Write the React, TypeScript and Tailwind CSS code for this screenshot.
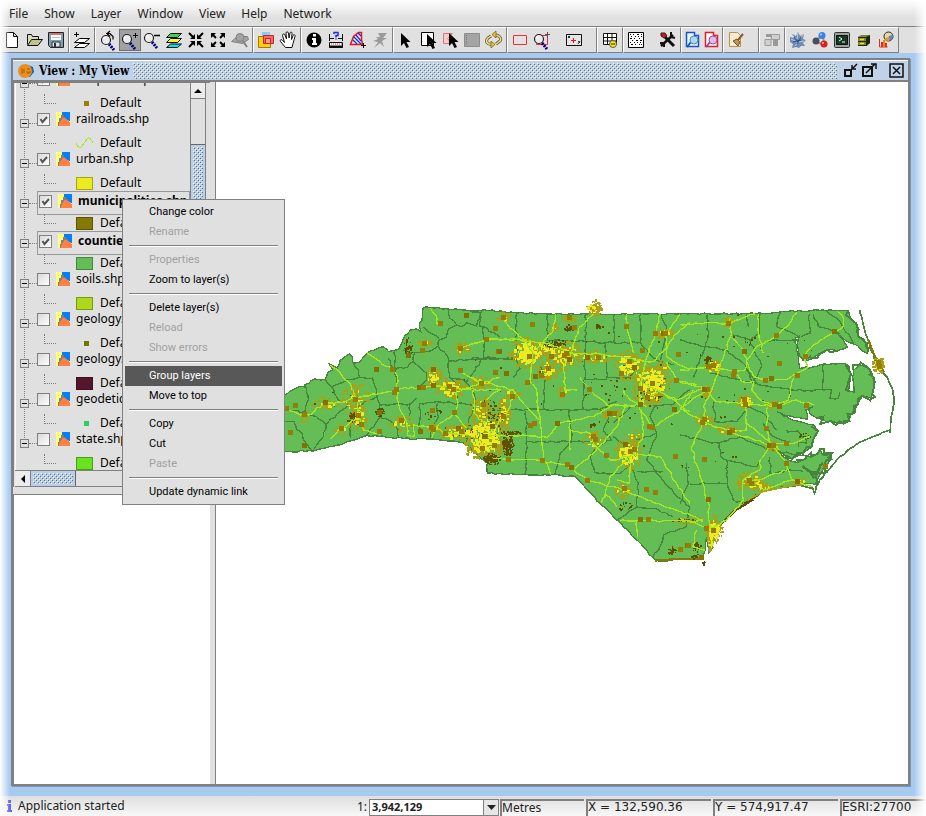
import React from "react";

/* ---------- shared bits ---------- */

function Texture({ id, dark }: { id: string; dark: string }) {
  return (
    <svg className="block h-full w-full" shapeRendering="crispEdges" aria-hidden="true">
      <defs>
        <pattern id={id} width="4" height="4" patternUnits="userSpaceOnUse">
          <path d="M0 0h1v1h-1zM2 2h1v1h-1z" fill="#ffffff" />
          <path d="M1 1h1v1h-1zM3 3h1v1h-1z" fill={dark} />
        </pattern>
      </defs>
      <rect width="100%" height="100%" fill={`url(#${id})`} />
    </svg>
  );
}

/* ---------- toolbar icons, drawn on a 22 x 22 grid ---------- */

const Lens = ({ x = 9, y = 9 }: { x?: number; y?: number }) => (
  <g transform={`translate(${x} ${y})`}>
    <path d="M3 4l5 6" stroke="#000080" strokeWidth="3" strokeDasharray="2 1" />
    <circle r="4.5" fill="#ececec" stroke="#222" strokeWidth="1.2" />
    <path d="M-2.500 0a2.500 2.500 0 0 1 2-2.500" stroke="#fff" fill="none" />
  </g>
);

const Pointer = ({ x = 0, y = 0 }: { x?: number; y?: number }) => (
  <path transform={`translate(${x} ${y})`} d="M7 4v13l3-3 2.500 5 2.500-1-2.500-5h4z" fill="#000" />
);

const icons: Record<string, React.ReactNode> = {
  New: <path d="M5.500 3.500h7l4 4v11h-11zM12.500 3.500v4h4" fill="#fff" stroke="#111" />,
  Open: (
    <>
      <path d="M4.500 15.500v-10h4l1 2h6v3" fill="#d9dcb4" stroke="#111" />
      <path d="M4.500 16.500l4-6h11l-4.500 6z" fill="#bfc48e" stroke="#111" />
    </>
  ),
  Save: (
    <>
      <path d="M3.500 3.500h15v15h-13l-2-2z" fill="#7d9fb8" stroke="#222" />
      <path d="M6 4h10v7h-10z" fill="#fff" />
      <path d="M6 4h10v2h-10z" fill="#e46a5e" />
      <path d="M7 8.500h8" stroke="#bbb" />
      <path d="M7 13h8v5h-8z" fill="#dfe5e8" stroke="#333" />
      <path d="M9 14h2v4h-2z" fill="#234" />
    </>
  ),
  "Add layer": (
    <>
      <path d="M3 5.500h5M5.500 3v5" stroke="#000" />
      <path d="M3.500 18.500l5-4h10l-5 4z" fill="#fff" stroke="#000" />
      <path d="M3.500 13.500l5-4h10l-5 4z" fill="#fff" stroke="#000" />
    </>
  ),
  "Previous zoom": (
    <>
      <Lens x={9} y={11} />
      <path d="M9 4.500h4l3 3v3M13 2l-3 2.500 3 3" stroke="#000" strokeWidth="1.200" fill="none" />
    </>
  ),
  "Zoom in": (
    <>
      <Lens x={8} y={10} />
      <path d="M14 6.500h5M16.500 4v5" stroke="#000" />
    </>
  ),
  "Zoom out": (
    <>
      <Lens x={8} y={9} />
      <path d="M13 6.500h6" stroke="#000" strokeWidth="1.500" />
    </>
  ),
  "Full extent": (
    <g stroke="#111">
      <path d="M3.500 18.500l4-3.500h11l-4 3.500z" fill="#00e5ee" />
      <path d="M3.500 13.500l4-4h11l-4 4z" fill="#fff22e" />
      <path d="M3.500 8.500l4-4h11l-4 4z" fill="#44cf52" />
    </g>
  ),
  "Zoom in centre": (
    <g>
      <path d="M4 4l5 5M18 4l-5 5M4 18l5-5M18 18l-5-5" stroke="#000" strokeWidth="2" />
      <path d="M10 5v5h-5zM12 5v5h5zM10 17v-5h-5zM12 17v-5h5z" fill="#000" />
    </g>
  ),
  "Zoom out centre": (
    <g>
      <path d="M5 5l4 4M17 5l-4 4M5 17l4-4M17 17l-4-4" stroke="#000" strokeWidth="2" />
      <path d="M4 4h5l-5 5zM18 4h-5l5 5zM4 18h5l-5-5zM18 18h-5l5-5z" fill="#000" />
    </g>
  ),
  "Zoom to selection": (
    <g stroke="#808080" fill="#a4a4a4">
      <path d="M2.500 12.500l6-5h10l1 3-6 4z" />
      <circle cx="11" cy="8.500" r="4" />
      <path d="M14 12l4 6" strokeWidth="2" />
    </g>
  ),
  "Locator map": (
    <>
      <path d="M7 3h8v7h-8z" fill="#7ed0f5" />
      <path d="M3.500 7.500h12v11h-12z" fill="#ffcd12" stroke="#a77904" />
      <path d="M8.500 6.500h10v8h-10z" fill="#f06b6b" stroke="#c22" />
      <path d="M10.500 9.500h5v5h-5z" fill="#f9a08e" stroke="#c22" />
    </>
  ),
  Pan: (
    <path d="M8.500 18.500l-5-6c-1-2 1-2.500 2-1l2 2-2-7c0-2 2-2 2.500-.5l1.500 4-.5-6c0-1.500 2-1.500 2.500 0l.5 5 1-5c.5-1.500 2.500-1 2 .5l-.5 6 1.500-4c1-1.500 2.500-.5 2 1l-2 7-1 4z" fill="#fff" stroke="#111" />
  ),
  Information: (
    <>
      <circle cx="11" cy="11" r="7.500" fill="#000" />
      <path d="M10 5h3v2.500h-3zM9 9h4v5h1v2h-5v-2h1v-3h-1z" fill="#fff" />
    </>
  ),
  "Measure distance": (
    <>
      <path d="M9 5v-1.500h4v3h-2v2M11 9.500v1" stroke="#1730e0" strokeWidth="1.500" fill="none" />
      <path d="M4.500 5v7M17.500 5v7M5 9.500h4M13 9.500h4" stroke="#111" />
      <path d="M4.500 13.500h13v5h-13z" fill="#fff" stroke="#111" />
      <path d="M4 17.500h14" stroke="#000" strokeWidth="2" />
      <path d="M6 15h11" stroke="#e21" strokeDasharray="1 1" />
    </>
  ),
  "Measure area": (
    <>
      <path d="M3.500 15.500l3-8 5-4h3v7l1 5z" fill="#dfe4ff" stroke="#e11" strokeWidth="1.500" />
      <path d="M6 11l4 4M7 8l7 7M9 6l5 6M11 4l3 3" stroke="#1730d0" strokeWidth="1.200" />
      <path d="M14 16.500h5M16.500 14v5" stroke="#000" />
    </>
  ),
  "Quick information": <path d="M9 4h9l-4 5h4l-5 3 2 6-4-4-6 5 4-6-5-1 5-2-2-2h4z" fill="#9b9b9b" />,
  "Select by point": <Pointer x={-1} />,
  "Select by rectangle": (
    <>
      <path d="M4.500 3.500h12v13h-12z" fill="#fff" stroke="#000" />
      <Pointer x={3} y={1} />
    </>
  ),
  "Select by polygon": (
    <>
      <path d="M4.500 4.500h9l-5 5 4 5h-8z" fill="#f6cccc" stroke="#d77" />
      <Pointer x={3} />
    </>
  ),
  "Select by attributes": (
    <>
      <path d="M3.500 4.500h15v13h-15z" fill="#a4a4a4" stroke="#8c8c8c" />
      <path d="M5.500 6v10" stroke="#777" strokeDasharray="1 1" />
    </>
  ),
  "Clear selection": (
    <>
      <path d="M12 6c4 0 7 3 5 6l-4 3M9 15c-5 1-7-3-4-6l3-2" stroke="#6b5a1c" strokeWidth="3" fill="none" />
      <path d="M12 6c4 0 7 3 5 6l-4 3M9 15c-5 1-7-3-4-6l3-2" stroke="#e9dc8c" strokeWidth="1.500" fill="none" />
      <path d="M13 2v7l-4-3.500zM8 12v7l4-3.500z" fill="#f0c428" stroke="#665520" strokeWidth="0.700" />
    </>
  ),
  Frame: <path d="M4.500 6.500h13v9h-13z" fill="#e8dede" stroke="#e0333a" />,
  "Frame manager": (
    <>
      <path d="M5.500 6.500h11v9h-11z" fill="#e8dede" stroke="#e0333a" />
      <Lens x={8} y={10} />
      <path d="M16.500 3v6M14 5.500h5" stroke="#555" />
    </>
  ),
  "Centre on point": (
    <>
      <path d="M3.500 5.500h15v11h-15z" fill="#e6e6e6" stroke="#111" />
      <path d="M8 11.500h5M10.500 9v5" stroke="#e11" />
      <path d="M5 7l2 2M7 7l-2 2M15 12l2 2M17 12l-2 3" stroke="#333" />
    </>
  ),
  "Attribute table": (
    <>
      <path d="M4.500 4.500h13v11h-13zM4.500 8.500h13M4.500 12h13M8.500 4.500v11M13 4.500v11" fill="#fff" stroke="#111" />
      <circle cx="14" cy="15" r="3.500" fill="#fff200" stroke="#555" />
      <path d="M12 15h4" stroke="#111" />
    </>
  ),
  "Point density": (
    <>
      <path d="M3.500 3.500h15v15h-15z" fill="#fff" stroke="#000" />
      <path
        d="M5 5.500h1m2 0h1m3 0h2m2 0h1M6 7.500h1m3 0h1m2 0h1m2 0h1M5 9.500h2m2 0h1m4 0h1M7 11.500h1m3 0h2m2 0h2M5 13.500h1m3 0h1m2 0h1m2 0h1M6 15.500h2m2 0h1m3 0h1m1 0h1"
        stroke="#000"
      />
    </>
  ),
  Tools: (
    <>
      <path d="M4 17L16 6" stroke="#111" strokeWidth="2.500" />
      <path d="M14 3v5l4 1M3 14l4 0v4" stroke="#111" strokeWidth="2" fill="none" />
      <path d="M8 8l9 9" stroke="#111" strokeWidth="3" />
      <path d="M4 4l4 0 2 3-3 2-3-2z" fill="#b02525" stroke="#511" />
    </>
  ),
  "Blue query": (
    <>
      <path d="M4.500 3.500h8v3h4v11h-12z" fill="#eef4ff" stroke="#1555c8" strokeWidth="1.500" />
      <path d="M9 13l-4 5" stroke="#1555c8" strokeWidth="2" />
      <circle cx="12" cy="11" r="4" fill="#a9dbf3" stroke="#5581a5" />
    </>
  ),
  "Red query": (
    <>
      <path d="M4.500 3.500h8v3h4v11h-12z" fill="#fff" stroke="#ed1b22" strokeWidth="1.500" />
      <path d="M9 13l-4 5" stroke="#824fad" strokeWidth="2" />
      <circle cx="12" cy="11" r="4" fill="#e7b8f0" stroke="#87599b" />
    </>
  ),
  "Edit style": (
    <>
      <path d="M4.500 3.500h8l3 3v11h-11z" fill="#f5ecd6" stroke="#b7954f" />
      <path d="M8 12l4-2 3 3-2 4z" fill="#c29551" stroke="#76511e" />
      <path d="M13 11l5-6" stroke="#8a5b24" strokeWidth="2" />
    </>
  ),
  Layout: (
    <>
      <path d="M4 10.500h6v6h-6zM10.500 5.500h8v5h-8z" fill="#d0d0d0" stroke="#9b9b9b" />
      <path d="M5 5h5v3h-5zM12 10h5v7h-5z" fill="#999" />
    </>
  ),
  Geoprocess: (
    <>
      <path d="M3 8l4 1-2-4 4 2 2-4 2 4 4-2-1 5 3 1-3 3 2 3-4 0-2 2-3-1-4 1 1-4-3-2z" fill="#6d8bb5" />
      <path d="M5 6l4 4M11 4l-1 6M16 6l-4 5M4 10l6 3M17 12l-5 1M8 17l3-4" stroke="#bccbe0" />
      <path d="M7 8l4 5M14 8l-4 7M6 13l8-2" stroke="#304b78" />
    </>
  ),
  Network: (
    <>
      <path d="M6 12l8-6M6 12l9 4M14 6l1 10" stroke="#999" strokeWidth="2" />
      <circle cx="13" cy="6.500" r="3.500" fill="#3b80e8" />
      <circle cx="7" cy="12" r="3.500" fill="#48505e" />
      <circle cx="15" cy="15" r="3.500" fill="#e21b1b" />
      <circle cx="12" cy="5.500" r="1" fill="#bcd6ff" />
      <circle cx="14" cy="14" r="1" fill="#fcc" />
    </>
  ),
  Console: (
    <>
      <rect x="3.500" y="3.500" width="15" height="15" rx="1" fill="#9ba59b" stroke="#333" />
      <path d="M5.500 6.500h11v9h-11z" fill="#1d3826" stroke="#111" />
      <path d="M8 8l3 2-3 2M11 13h3" stroke="#dfe" fill="none" />
    </>
  ),
  Archive: (
    <>
      <path d="M5 8l3-2h9v8l-3 3h-9z" fill="#7b8a20" />
      <path d="M13 8l4-2v8l-4 3z" fill="#1e2208" />
      <path d="M5 8.500h9M5 12.500h9M5 16.500h9" stroke="#222" />
      <path d="M7 10.500h4M7 14.500h4" stroke="#e4df3b" strokeWidth="1.500" />
    </>
  ),
  Chart: (
    <>
      <path d="M4.500 10v8h8" stroke="#c33" fill="none" />
      <path d="M6 13h2v5h-2zM10 14h2v4h-2z" fill="#e22" />
      <path d="M8 11h2v7h-2z" fill="#e98b00" />
      <circle cx="13.500" cy="7.500" r="4.500" fill="#ead7a8" stroke="#222" />
      <path d="M13.500 7.500l4-2a4.500 4.500 0 0 1-3 6.300z" fill="#5d87c5" />
      <path d="M13.500 7.500l1 4.300a4.500 4.500 0 0 1-5-2z" fill="#e99b1f" />
    </>
  ),
};

type Group = { items: string[]; cell?: string; pad?: string };

const groups: Group[] = [
  { items: ["New", "Open", "Save"] },
  { items: ["Add layer"] },
  { items: ["Previous zoom", "Zoom in", "Zoom out", "Full extent", "Zoom in centre", "Zoom out centre", "Zoom to selection"] },
  { items: ["Locator map", "Pan"] },
  { items: ["Information", "Measure distance", "Measure area", "Quick information"] },
  { items: ["Select by point", "Select by rectangle", "Select by polygon", "Select by attributes", "Clear selection"] },
  { items: ["Frame", "Frame manager", "|", "Centre on point"], pad: "pr-[11px]" },
  { items: ["Attribute table"] },
  { items: ["Point density", "|", "Tools"] },
  { items: ["Blue query", "Red query"], cell: "w-[19px]" },
  { items: ["Edit style"], pad: "pr-[11px]" },
  { items: ["Layout"] },
  { items: ["Geoprocess", "Network", "Console", "Archive", "Chart"] },
];

function Toolbar() {
  return (
    <div className="flex h-[27px] shrink-0 overflow-hidden border-t border-[#808080] bg-[#e0e0e0]" role="toolbar">
      {groups.map((g, i) => (
        <div
          key={i}
          className={`flex shrink-0 items-center border-b border-l border-r border-t border-b-[#808080] border-l-white border-r-[#808080] border-t-white ${i === 0 ? "" : "pl-px"} ${g.pad ?? "pr-px"}`}
        >
          {g.items.map((name, k) =>
            name === "|" ? (
              <span key={k} className="w-2.5" />
            ) : (
              <button
                key={k}
                type="button"
                aria-label={name}
                className={`flex h-[22px] items-center justify-center ${g.cell ?? "w-[22px]"} ${name === "Zoom in" ? "border border-[#6e6e6e] bg-[#a0a0a0]" : ""}`}
              >
                <svg width="22" height="22" viewBox="0 0 22 22" fill="none" className="shrink-0">
                  {icons[name]}
                </svg>
              </button>
            )
          )}
        </div>
      ))}
    </div>
  );
}

/* ---------- layer tree ---------- */

type Layer = {
  name: string;
  on?: boolean;
  active?: boolean;
  kind: "dot" | "line" | "fill";
  color: string;
  edge?: string;
};

const layers: Layer[] = [
  { name: "hospitals.shp", kind: "dot", color: "#958300", on: true },
  { name: "railroads.shp", kind: "line", color: "#a5e61e", on: true },
  { name: "urban.shp", kind: "fill", color: "#ebeb20", edge: "#a5a514", on: true },
  { name: "municipalities.shp", kind: "fill", color: "#857a06", edge: "#5c5404", on: true, active: true },
  { name: "counties.shp", kind: "fill", color: "#64be55", edge: "#46853c", on: true, active: true },
  { name: "soils.shp", kind: "fill", color: "#afd71c", edge: "#7b9713" },
  { name: "geology.shp", kind: "dot", color: "#757500" },
  { name: "geology.shp", kind: "fill", color: "#55162b", edge: "#3b0f1e" },
  { name: "geodetic.shp", kind: "dot", color: "#28cf5c" },
  { name: "state.shp", kind: "fill", color: "#69e321", edge: "#499f17" },
];

function LayerIcon() {
  return (
    <svg width="14" height="14" viewBox="0 0 14 14" shapeRendering="crispEdges" className="shrink-0">
      <path d="M0 0h14v14h-14z" fill="#ffff7d" />
      <path d="M6 0h8v9h-3l-2-3h-3z" fill="#0080ff" />
      <path d="M5 3h3v2h2v2h-4v3h-1v4h-3v-4h1v-4h2z" fill="#808080" />
      <path d="M6 6h3v1h2v1h2v2h1v4h-11v-3h1v-2h1v-1h1z" fill="#ff8040" />
    </svg>
  );
}

function Tree() {
  return (
    <ul className="relative flex min-h-0 flex-1 flex-col justify-end overflow-hidden border-l border-white bg-[#e0e0e0] text-[12px] leading-[14px] text-black">
      {layers.map((l, i) => (
        <li key={i} className="shrink-0">
          <div className="flex h-[26px] items-center pl-1">
            <button type="button" aria-label={`Collapse ${l.name}`} className="z-10 flex size-[9px] shrink-0 items-center justify-center border border-[#808080] bg-[#e0e0e0]">
              <span className="h-px w-[5px] bg-black" />
            </button>
            <span className="w-2 shrink-0 border-t border-dotted border-[#808080]" />
            <label
              className={`flex shrink-0 items-center gap-[6px] whitespace-nowrap ${
                l.active ? "h-6 w-[153px] border border-[#999] pb-1 pl-px font-bold" : "h-[26px] pb-2"
              }`}
            >
              <span className="relative flex size-[13px] shrink-0">
                <input
                  type="checkbox"
                  defaultChecked={l.on}
                  className="size-[13px] appearance-none border border-[#808080] bg-gradient-to-br from-[#d8d8d8] to-white"
                />
                {l.on && (
                  <svg className="pointer-events-none absolute left-0 top-0" width="13" height="13" viewBox="0 0 13 13">
                    <path d="M3.500 6l2 3 4.500-5" fill="none" stroke="#555" strokeWidth="2" />
                  </svg>
                )}
              </span>
              <LayerIcon />
              <span>{l.name}</span>
            </label>
          </div>
          <div className="flex h-3.5 items-center pl-7">
            <span className="mb-2 h-2.5 w-3 shrink-0 border-b border-l border-dotted border-[#808080]" />
            <span className="ml-5 flex w-[17px] shrink-0 items-center justify-center">
              <svg width="17" height="13" viewBox="0 0 17 13" shapeRendering="crispEdges">
                {l.kind === "fill" && <rect x="0.5" y="0.5" width="16" height="12" fill={l.color} stroke={l.edge} />}
                {l.kind === "dot" && <rect x="8" y="4" width="5" height="5" fill={l.color} />}
                {l.kind === "line" && <path d="M0 6q3 7 6 3t6-8q2-1 5 5" fill="none" stroke={l.color} />}
              </svg>
            </span>
            <span className="ml-[7px]">Default</span>
          </div>
        </li>
      ))}
      <li aria-hidden="true" className="absolute bottom-[26px] left-2 top-0 border-l border-dotted border-[#808080]" />
    </ul>
  );
}

/* ---------- map ---------- */

function makeRandom(seed: number) {
  let s = seed;
  return () => {
    s = (s * 16807) % 2147483647;
    return s / 2147483647;
  };
}

type Pt = [number, number];
const parse = (t: string): Pt[] =>
  t.trim().split(/\s+/).map((p) => p.split(",").map(Number) as Pt);

// Breaks straight runs into short uneven steps, as in digitised boundaries.
function rough(text: string, amp: number, seed: number, closed = false) {
  const rnd = makeRandom(seed);
  const pts = parse(text);
  let d = `M${pts[0][0]} ${pts[0][1]}`;
  for (let i = 1; i < pts.length; i++) {
    const [ax, ay] = pts[i - 1];
    const [bx, by] = pts[i];
    const n = Math.max(1, Math.round(Math.hypot(bx - ax, by - ay) / 12));
    for (let k = 1; k <= n; k++) {
      const j = k === n ? 0 : amp;
      const x = ax + ((bx - ax) * k) / n + (rnd() - 0.5) * j;
      const y = ay + ((by - ay) * k) / n + (rnd() - 0.5) * j;
      d += `L${x.toFixed(0)} ${y.toFixed(0)}`;
    }
  }
  return closed ? d + "z" : d;
}

function speckle(cx: number, cy: number, rx: number, ry: number, n: number, size: number, seed: number) {
  const rnd = makeRandom(seed);
  let d = "";
  for (let i = 0; i < n; i++) {
    const a = rnd() * Math.PI * 2;
    const r = Math.pow(rnd(), 0.8);
    const w = 3 * (1 + Math.floor(rnd() * size));
    const h = 3 * (1 + Math.floor(rnd() * size));
    const x = Math.round((cx + Math.cos(a) * rx * r - w / 2) / 3) * 3;
    const y = Math.round((cy + Math.sin(a) * ry * r - h / 2) / 3) * 3;
    d += `M${x} ${y}h${w}v${h}h${-w}z`;
  }
  return d;
}

const land =
  "-150,400 -60,350 15,315 30,303 60,290 78,292 74,284 105,267 135,268 142,248 158,240 148,222 172,235 180,212 210,192 218,202 220,220 238,218 262,188 275,182 310,170 325,184 340,182 356,178 370,145 392,120 410,117 422,125 418,100 426,92 430,52 500,56 550,60 660,63 715,69 800,72 1200,72 1500,69 1500,64 1640,61 1706,61 1712,85 1728,100 1735,140 1758,160 1762,190 1742,178 1722,162 1695,150 1675,134 1690,150 1702,172 1672,182 1640,180 1618,192 1594,206 1570,212 1558,196 1552,160 1558,138 1546,145 1550,180 1556,215 1558,236 1600,231 1636,222 1690,220 1706,226 1712,250 1706,303 1722,306 1720,240 1740,224 1765,234 1780,260 1782,290 1775,326 1748,318 1732,345 1715,372 1708,392 1690,400 1640,396 1610,384 1590,372 1586,355 1600,350 1578,360 1582,388 1530,378 1492,366 1510,378 1545,392 1600,404 1614,424 1600,448 1594,472 1570,488 1536,506 1512,494 1492,480 1510,500 1530,512 1554,518 1580,500 1612,492 1620,478 1630,496 1656,490 1654,508 1622,548 1606,584 1588,580 1560,582 1490,596 1450,604 1415,628 1365,665 1325,700 1306,738 1294,782 1286,790 1280,740 1276,780 1262,806 1190,806 1140,815 1125,808 1040,718 960,640 882,558 770,555 622,550 622,520 580,485 560,458 480,450 370,445 260,437 215,452 175,465 100,483 15,484 -150,484";

const coast = [
  "1706,226 1712,250 1706,303",
  "1720,240 1740,224 1765,234 1780,260 1782,290 1775,326 1748,318 1732,345 1715,372 1708,392 1690,400 1640,396 1610,384",
  "1600,404 1614,424 1600,448 1594,472 1570,488 1536,506 1512,494",
  "1554,518 1580,500 1612,492 1620,478 1630,496 1656,490 1654,508 1622,548 1606,584",
  "1706,61 1712,85 1728,100 1735,140 1758,160 1762,190",
  "1672,182 1640,180 1618,192 1594,206 1570,212",
];

const banks = [
  "1740,60 1748,95 1760,140 1776,186 1798,236 1822,262 1838,300 1843,335 1834,380 1830,428",
  "1830,420 1790,436 1740,456 1700,484 1670,510 1634,552 1608,590 1604,610 1598,594 1560,586 1500,592",
];

const counties = [
  "505,60 510,85 530,105 545,110 560,98 590,108 605,62", "430,110 455,130 478,148 500,140 505,118 530,105", "478,148 475,168 440,185 404,188 370,180",
  "610,110 611,204 505,214", "475,168 500,195 505,214 508,262 545,300", "404,188 400,215 370,235 340,235 325,205", "345,180 345,215 350,290",
  "400,215 440,250 440,268 420,288", "220,220 235,240 240,262 200,270 155,290", "135,268 155,290 175,330 205,345", "240,262 278,264 290,300 292,318 230,352",
  "80,293 85,330 75,366 40,362", "75,366 110,380 138,402 130,440 100,480", "138,402 180,365 205,345", "211,380 211,445", "292,318 300,345 390,342 410,325", "300,345 300,382 260,436",
  "300,382 330,392 355,420 355,440", "390,342 388,390", "420,340 418,430", "420,340 480,336 575,345", "472,340 475,380 455,410 450,446", "575,205 660,206", "610,204 545,298",
  "511,264 550,270 580,300 585,345 565,390 560,456", "-10,392 42,395 50,418 66,430 72,452 95,482",
  "570,62 600,70 600,110 610,110 660,140", "710,68 709,205 612,204", "803,72 803,152", "610,204 709,208 720,235 700,262", "917,72 917,155 1000,158 1082,157 1081,72", "1003,72 1002,157",
  "803,152 917,155 914,268 980,268 976,158", "793,360 795,270 780,230", "910,358 911,270", "650,360 960,358 1010,335", "738,362 740,450 735,552", "868,360 875,455 840,490 825,555", "740,455 875,455 930,455",
  "960,358 985,385 970,420 995,450", "980,262 1050,262 1068,235", "1082,157 1110,195 1140,215 1180,225", "1143,72 1160,110 1148,175 1140,215", "1000,400 1052,350 1082,340",
  "995,450 950,470 930,500 945,548 960,550 1020,550 1050,520", "1000,440 1040,465 1070,450 1130,430", "1130,345 1110,380 1130,430 1100,510 1140,560 1190,620 1230,650", "1070,545 1150,543",
  "1050,520 1075,580 1070,650 1010,690", "1070,650 1120,655 1180,680", "1230,650 1220,710 1150,735 1140,770 1118,800", "1120,345 1175,345 1230,300",
  "1283,72 1283,150 1240,265", "1200,150 1283,170 1340,180", "1440,72 1438,130 1410,150 1360,135", "1410,150 1445,230 1420,280 1400,240", "1462,152 1555,150", "1340,180 1390,220 1430,280 1400,275 1340,260 1290,250",
  "1430,280 1535,300 1655,300 1650,325 1675,325 1680,305", "1535,300 1525,330 1480,350", "1630,222 1628,298", "1400,72 1405,110", "1500,72 1490,110 1530,125 1555,140",
  "1600,72 1615,110 1680,130", "1640,62 1680,95 1722,162", "1588,72 1590,130 1562,140", "1302,335 1304,395 1370,395 1400,360", "1200,435 1230,445 1318,460 1322,500 1340,510 1342,580 1230,582",
  "1318,460 1380,440 1460,478 1580,500", "1342,580 1360,630 1390,640", "1340,510 1430,530 1440,510", "1470,500 1470,550 1530,540 1570,545", "1450,400 1480,440 1530,455", "1220,520 1225,580 1200,640", "1400,350 1450,370 1490,420",
];

const roads = [
  "15,357 45,366 60,375 95,372 130,340 185,337 228,325 290,313 350,298 420,292 500,290 545,298 605,280",
  "150,225 180,248 205,275 228,325 236,380 250,420 300,432", "262,188 300,215 338,240 352,258 350,298 358,350 380,395 382,435 402,440 402,405 455,412 500,430 560,435",
  "452,55 468,75 472,105", "535,178 580,160 620,148 660,150 740,150", "540,240 572,262 605,280 660,262", "150,447 185,415 228,388", "530,300 532,350 525,370 470,410 455,445",
  "525,370 560,415", "580,300 582,370 615,400", "545,298 660,300 640,310 620,330",
  "570,164 630,148 710,148 740,155 800,160 880,190 960,192 1020,200 1080,210 1120,215 1200,120 1230,98", "670,82 690,115 735,150 760,190 750,270 770,300 780,400 790,500 812,555",
  "770,180 820,120 826,72", "940,72 900,110 885,150 870,200 850,240 855,300 890,300", "570,262 620,280 700,300 740,350 780,390", "620,440 740,437 800,442 840,400 940,380 1000,345 1080,345",
  "640,505 780,512 860,525 925,572 1000,590 1100,630 1270,690", "700,320 680,370 630,430", "900,262 930,300 980,345 1060,350 1140,300", "1040,72 1045,130 1060,190", "1140,72 1130,120 1100,200 1080,280 1080,345 1090,400 1085,450 1050,500",
  "1090,280 1150,310 1190,330 1280,290", "1082,360 1120,410 1200,360 1240,300", "1150,310 1230,365", "1050,500 990,560 965,640", "1050,490 1140,500 1190,580 1230,640", "870,400 870,480", "870,420 930,430 950,470 990,510 1050,500",
  "885,535 940,490 1010,410 1040,345", "1020,693 1270,693", "1070,693 1072,740", "1230,240 1160,200 1160,130 1200,72", "1050,500 1048,580 1010,570", "975,605 1010,650", "1160,215 1190,270 1250,285", "1030,300 1050,330 1100,350",
  "1200,103 1290,98 1345,100 1425,72", "1350,85 1352,140 1390,180 1420,260 1470,270 1520,268 1552,250", "1550,68 1520,110 1490,140 1430,170 1400,210 1395,240 1360,245", "1436,72 1436,130 1450,190",
  "1352,140 1320,230 1295,300 1275,340 1270,395 1235,470 1260,560 1285,640 1290,710", "1200,240 1290,232 1365,243 1385,275 1420,275 1415,300 1440,330 1490,350", "1200,275 1280,298 1310,335 1400,340 1480,350 1550,330 1600,345",
  "1200,355 1280,300", "1200,355 1270,395 1350,425 1470,465 1540,460 1590,440", "1463,350 1460,415 1475,465 1520,520 1535,570 1600,590", "1400,345 1398,420 1350,430", "1475,465 1440,510 1440,540 1390,570 1390,630 1340,690 1290,715",
  "1535,570 1450,600", "1200,685 1290,715", "1540,265 1525,330 1490,345", "1575,200 1584,232 1552,250", "1575,200 1600,165 1660,128 1690,110 1690,85 1670,62", "1400,400 1500,480", "1415,575 1520,540", "1250,720 1238,770 1275,780",
];

const towns =
  "482,100 559,76 646,115 435,160 427,181 385,196 542,176 620,148 655,184 289,238 338,240 350,299 345,308 460,240 541,241 646,247 605,280 420,292 432,294 508,290 520,298 460,286 228,328 236,378 246,403 138,337 47,346 73,373 32,429 73,468 184,415 300,425 365,393 421,424 455,412 460,420 524,367 535,415 496,430 544,424 612,345 638,411 618,440 20,357 459,362 300,368 " +
  "672,82 757,105 884,114 658,184 748,200 814,200 860,190 870,210 855,196 868,84 805,235 766,260 784,256 742,277 697,320 679,250 848,315 928,300 956,204 922,204 670,380 763,400 751,406 832,400 686,508 788,512 862,523 874,534 924,573 643,466 607,475 615,440 940,440 947,448 979,496 990,372 1003,372 1052,484 1064,480 1036,464 1033,596 1099,598 1126,607 1081,690 1105,688 1087,182 1127,132 1150,132 1158,130 1195,193 1190,273 1184,360 1118,413 1110,411 1050,215 1063,233 1082,295 1117,280 1102,322 1081,343 1025,250 1039,109 1188,500 1224,768 1201,778 " +
  "1345,102 1489,138 1663,126 1577,200 1498,220 1552,256 1474,265 1457,273 1363,244 1360,256 1393,184 1286,230 1302,228 1282,300 1275,300 1394,330 1398,345 1483,345 1498,349 1579,346 1460,415 1519,462 1470,468 1480,468 1520,520 1636,529 1552,574 1408,572 1415,582 1357,422 1350,428 1274,390 1268,398 1275,510 1285,628 1279,715 1300,722 1226,768 1264,802 1796,218 1800,230";

// cx, cy, rx, ry, density of the built-up halo, density of the bright core
const cities: [number, number, number, number, number, number][] = [
  [225, 330, 46, 52, 110, 20], [235, 385, 30, 46, 80, 18], [135, 342, 42, 20, 50, 5], [365, 400, 36, 24, 40, 10], [460, 260, 26, 34, 80, 24], [515, 296, 48, 32, 130, 50],
  [545, 178, 26, 18, 40, 4], [435, 158, 22, 12, 20, 2], [605, 280, 34, 20, 60, 5], [535, 430, 60, 26, 110, 40], [600, 365, 32, 50, 130, 14], [675, 360, 18, 50, 80, 14], [618, 440, 66, 72, 330, 230], [585, 485, 26, 20, 50, 2],
  [670, 385, 24, 44, 80, 14], [697, 318, 22, 26, 44, 8], [740, 190, 56, 48, 190, 150], [790, 180, 60, 30, 80, 30], [855, 196, 54, 48, 200, 70], [806, 240, 32, 34, 80, 24], [672, 82, 22, 16, 28, 2], [950, 202, 62, 20, 80, 8],
  [850, 305, 16, 28, 24, 2], [940, 450, 32, 28, 60, 7], [942, 55, 24, 24, 60, 10], [1048, 228, 44, 48, 150, 90], [1115, 275, 62, 58, 260, 150], [1105, 325, 44, 24, 90, 12], [1046, 492, 42, 50, 160, 100],
  [1060, 440, 28, 24, 30, 6], [1030, 603, 28, 20, 40, 6], [1150, 130, 34, 14, 40, 4], [1000, 375, 26, 22, 34, 2], [1150, 235, 20, 24, 34, 2], [868, 85, 24, 12, 22, 0],
  [1300, 230, 26, 24, 54, 18], [1280, 300, 22, 22, 34, 2], [1400, 335, 28, 22, 64, 26], [1270, 393, 30, 24, 54, 4], [1345, 422, 34, 18, 50, 4], [1408, 574, 42, 30, 90, 22], [1303, 720, 26, 40, 120, 80],
  [1293, 760, 9, 28, 30, 12], [1450, 590, 30, 14, 50, 6], [1475, 468, 22, 20, 34, 4], [1796, 225, 18, 26, 54, 9], [1230, 692, 50, 12, 34, 0], [1560, 574, 26, 14, 24, 2], [1345, 98, 20, 16, 18, 0],
  [1484, 345, 22, 14, 22, 2], [75, 380, 12, 24, 18, 1], [185, 418, 20, 18, 18, 1], [455, 415, 26, 14, 24, 2], [640, 190, 0, 0, 1, 0], [735, 150, 14, 18, 14, 2], [820, 115, 14, 18, 14, 2],
];

const darkSpots: [number, number, number, number, number][] = [
  [386, 170, 16, 30, 44], [215, 383, 14, 16, 44], [300, 368, 13, 12, 50], [638, 508, 28, 18, 110], [685, 468, 18, 32, 150], [700, 430, 36, 9, 44], [826, 162, 34, 14, 70], [868, 115, 15, 10, 34], [958, 110, 11, 7, 18],
  [455, 370, 30, 24, 12], [638, 385, 36, 56, 50], [560, 430, 60, 16, 24], [940, 406, 8, 6, 12], [1285, 212, 12, 14, 40], [1410, 160, 200, 90, 22], [1370, 330, 160, 60, 16], [1175, 785, 14, 14, 26], [1250, 772, 14, 14, 30], [1248, 800, 18, 7, 20],
  [1272, 820, 8, 6, 12], [1000, 300, 260, 180, 44], [1210, 690, 40, 6, 16], [1270, 500, 110, 80, 9], [500, 300, 200, 120, 12], [150, 360, 120, 80, 8], [1575, 440, 20, 10, 12], [1035, 650, 30, 12, 14], [1110, 320, 50, 40, 24],
];

function StateMap() {
  return (
    <svg width="694" height="704" viewBox="216 82 694 704" className="block shrink-0" shapeRendering="crispEdges" role="img" aria-label="Map of counties, municipalities, urban areas and railroads">
      <g transform="translate(280 290) scale(.333333)" fill="none">
        <path d={rough(land, 5, 11, true)} fill="#64be55" stroke="#46853c" strokeWidth="4" />
        {coast.map((c, i) => (
          <path key={i} d={rough(c, 22, 31 + i)} stroke="#46853c" strokeWidth="6" />
        ))}
        <path d={rough("1520,420 1560,430 1580,450 1555,470", 20, 5)} stroke="#46853c" strokeWidth="4" />
        <path d={rough("1570,530 1590,545 1600,560 1630,520", 26, 9)} stroke="#46853c" strokeWidth="8" />
        {banks.map((c, i) => (
          <path key={i} d={rough(c, 4, 71 + i)} stroke="#46853c" strokeWidth="5" />
        ))}
        {counties.map((c, i) => (
          <path key={i} d={rough(c, 6, 101 + i)} stroke="#46853c" strokeWidth="4" />
        ))}
        <path d="M1325 700L1365 662L1420 628M1395 640L1430 615" stroke="#5f5000" strokeWidth="7" />
        <path d="M1400 632L1450 604L1500 594L1560 582" stroke="#a5a514" strokeWidth="5" />
        <path d="M1125 812L1200 806L1262 806" stroke="#857a06" strokeWidth="6" />
        <path d="M1765 150L1780 190L1812 246" stroke="#857a06" strokeWidth="7" />
        {cities.map(([x, y, rx, ry, n], i) => (
          <path key={i} d={speckle(x, y, rx, ry, n, 3, 501 + i * 13)} fill="#aaa016" />
        ))}
        {darkSpots.map(([x, y, rx, ry, n], i) => (
          <path key={i} d={speckle(x, y, rx, ry, n, 2, 301 + i * 7)} fill="#5f5000" />
        ))}
        {cities.map(([x, y, rx, ry, , n], i) => (
          <path key={i} d={speckle(x, y, rx * 0.68, ry * 0.68, n, 3, 901 + i * 17)} fill="#ebeb20" />
        ))}
        {roads.map((c, i) => (
          <path key={i} d={rough(c, 6, 1301 + i)} stroke="#a5e61e" strokeWidth="4" />
        ))}
        {parse(towns).map(([x, y], i) => (
          <rect key={i} x={x - 8} y={y - 8} width="15" height="15" fill={i % 4 === 1 ? "#857006" : "#957d08"} />
        ))}
      </g>
    </svg>
  );
}

/* ---------- context menu ---------- */

const menuItems = [
  "Change color", "~Rename", "-", "~Properties", "Zoom to layer(s)", "-", "Delete layer(s)", "~Reload", "~Show errors", "-",
  "Group layers", "Move to top", "-", "Copy", "Cut", "~Paste", "-", "Update dynamic link",
];

function ContextMenu() {
  return (
    <div role="menu" className="absolute left-[122px] top-[199px] z-20 w-[163px] border border-[#808080] bg-[#e0e0e0] p-0.5 font-[Roboto,sans-serif] text-[11px] leading-5">
      {menuItems.map((m, i) =>
        m === "-" ? (
          <div key={i} role="separator" className="mx-1 flex h-2 items-center">
            <div className="h-0.5 w-full border-b border-t border-b-white border-t-[#808080]" />
          </div>
        ) : (
          <button
            key={i}
            type="button"
            role="menuitem"
            disabled={m.startsWith("~")}
            className={`block h-5 w-full whitespace-nowrap pl-6 text-left ${
              m === "Group layers" ? "bg-[#585858] text-white" : m.startsWith("~") ? "text-[#a0a0a0]" : "text-black"
            }`}
          >
            {m.replace("~", "")}
          </button>
        )
      )}
    </div>
  );
}

/* ---------- page ---------- */

const field = "h-[17px] shrink-0 overflow-hidden whitespace-nowrap border-l-2 border-t-2 border-[#808080] leading-[13px]";

export default function App() {
  return (
    <div className="relative flex h-screen flex-col overflow-hidden bg-[#a6caf0] font-['Noto_Sans',sans-serif] text-[12px] text-[#222]">
      <nav className="flex h-[26px] shrink-0 items-center gap-4 bg-gradient-to-b from-white to-[#e0e0e0] to-70% pl-[9px] pt-0.5">
        {["File", "Show", "Layer", "Window", "View", "Help", "Network"].map((m) => (
          <button key={m} type="button">{m}</button>
        ))}
      </nav>
      <Toolbar />

      <main className="flex min-h-0 flex-1 flex-col pb-2.5 pl-[11px] pr-4 pt-[5px]">
        <section className="flex min-h-0 flex-1 flex-col border-2 border-[#808080] bg-[#c0d2e8] shadow-[1px_1px_0_#8096b0]">
          <header className="flex h-5 shrink-0 items-center border-t border-white pl-[5px] pr-1">
            <svg width="17" height="16" viewBox="0 0 17 16" className="shrink-0">
              <path d="M10 2l5 2 1 5-4 5-4-1z" fill="#1b65a8" />
              <circle cx="7" cy="8" r="7" fill="#ef8f17" />
              <path d="M3 6h2M3 10h2M6 6v4M9 6h3M9 10h3M3 8h2M9 8v2M12 8v2" stroke="#9c5a12" />
            </svg>
            <h1 className="ml-1 mr-1 whitespace-nowrap font-['DejaVu_Serif_Condensed','DejaVu_Serif',serif] text-[12px] font-bold leading-4 text-black">View : My View</h1>
            <div className="h-4 min-w-0 flex-1">
              <Texture id="title-dots" dark="#66707c" />
            </div>
            <div className="ml-1.5 flex items-center gap-1">
              <button type="button" aria-label="Minimise">
                <svg width="15" height="15" viewBox="0 0 15 15" fill="none" stroke="#111">
                  <path d="M2 7h6v6h-6z" strokeWidth="2" />
                  <path d="M14 1l-4 4M9 2v4h4" strokeWidth="1.500" />
                </svg>
              </button>
              <button type="button" aria-label="Maximise">
                <svg width="15" height="15" viewBox="0 0 15 15" fill="none" stroke="#111">
                  <path d="M1 4h9v9h-9z" strokeWidth="2" />
                  <path d="M4 10l9-9M9 1h5v5" strokeWidth="1.500" />
                </svg>
              </button>
              <button type="button" aria-label="Close" className="ml-2">
                <svg width="15" height="15" viewBox="0 0 15 15" fill="none" stroke="#111">
                  <path d="M1 1h13v13h-13z" strokeWidth="1.500" />
                  <path d="M4 4l7 7M11 4l-7 7" strokeWidth="1.500" />
                </svg>
              </button>
            </div>
          </header>

          <div className="flex min-h-0 flex-1 border-t-2 border-[#808080] bg-[#e0e0e0]">
            <aside className="flex w-[197px] shrink-0 flex-col">
              <div className="flex h-[405px] shrink-0 flex-col border-l border-t border-[#808080] pl-px">
                <div className="flex min-h-0 flex-1">
                  <Tree />
                  <div className="mr-1 flex w-[16px] shrink-0 flex-col border-l border-r border-[#808080]">
                    <button type="button" aria-label="Scroll up" className="flex h-4 items-center justify-center border-b border-[#808080] bg-[#ececec]">
                      <svg width="8" height="4" viewBox="0 0 8 4"><path d="M4 0l4 4H0z" /></svg>
                    </button>
                    <div className="h-[45px] bg-[#e0e0e0]" />
                    <div className="min-h-0 flex-1 border-t border-[#666] bg-[#b8cfe5] p-0.5">
                      <Texture id="vscroll-dots" dark="#5c6c80" />
                    </div>
                  </div>
                </div>
                <div className="flex h-[17px] shrink-0 border-b border-t border-[#808080]">
                  <button type="button" aria-label="Scroll left" className="flex w-4 items-center justify-center border-r border-[#808080] bg-[#ececec]">
                    <svg width="4" height="8" viewBox="0 0 4 8"><path d="M0 4l4-4v8z" /></svg>
                  </button>
                  <div className="w-[45px] border-r border-[#666] bg-[#b8cfe5] p-0.5">
                    <Texture id="hscroll-dots" dark="#5c6c80" />
                  </div>
                </div>
              </div>
              <div className="h-2 shrink-0 border-b border-[#808080]" />
              <div className="min-h-0 flex-1 border-l border-[#808080] bg-white" />
            </aside>
            <div className="w-[5px] shrink-0 bg-[#e0e0e0]" />
            <div className="min-w-0 flex-1 overflow-hidden border-l border-[#808080] bg-white">
              <StateMap />
            </div>
          </div>
        </section>
      </main>

      <footer className="flex h-5 shrink-0 items-start bg-gradient-to-b from-[#dedede] to-[#f8f8f8] pl-[7px] pt-[3px]">
        <svg width="5" height="12" viewBox="0 0 5 12" className="mt-px shrink-0">
          <path d="M1 0h3v3h-3zM0 4h4v6h1v2h-5v-2h1v-4h-1z" fill="#6464f0" />
        </svg>
        <span className="ml-1.5 min-w-0 flex-1 whitespace-nowrap leading-[14px]">Application started</span>
        <label htmlFor="scale" className="mr-0.5 leading-4">1:</label>
        <div className="mr-px flex h-[17px] w-[130px] shrink-0 border border-[#808080] bg-white">
          <input id="scale" defaultValue="3,942,129" className="h-3.5 min-w-0 flex-1 pl-0.5 text-[11px] font-bold leading-[14px] text-[#222] outline-none" />
          <button type="button" aria-label="Choose scale" className="flex w-[15px] items-center justify-center border-l border-[#808080] bg-[#e6e6e6]">
            <svg width="9" height="5" viewBox="0 0 9 5"><path d="M0 0h9L4.500 5z" fill="#222" /></svg>
          </button>
        </div>
        <span className={`${field} mr-0.5 w-[84px]`}>Metres</span>
        <span className={`${field} mr-0.5 w-[125px] font-['DejaVu_Sans',sans-serif]`}>X = 132,590.36</span>
        <span className={`${field} mr-0.5 w-[125px] font-['DejaVu_Sans',sans-serif]`}>Y = 574,917.47</span>
        <span className={`${field} w-[86px] font-['DejaVu_Sans',sans-serif]`}>ESRI:27700</span>
      </footer>

      <ContextMenu />
      <div className="pointer-events-none absolute inset-y-0 left-0 z-10 w-2.5 bg-gradient-to-r from-white to-transparent" />
      <div className="pointer-events-none absolute inset-y-0 right-0 z-10 w-3 bg-gradient-to-l from-white to-transparent" />
    </div>
  );
}
